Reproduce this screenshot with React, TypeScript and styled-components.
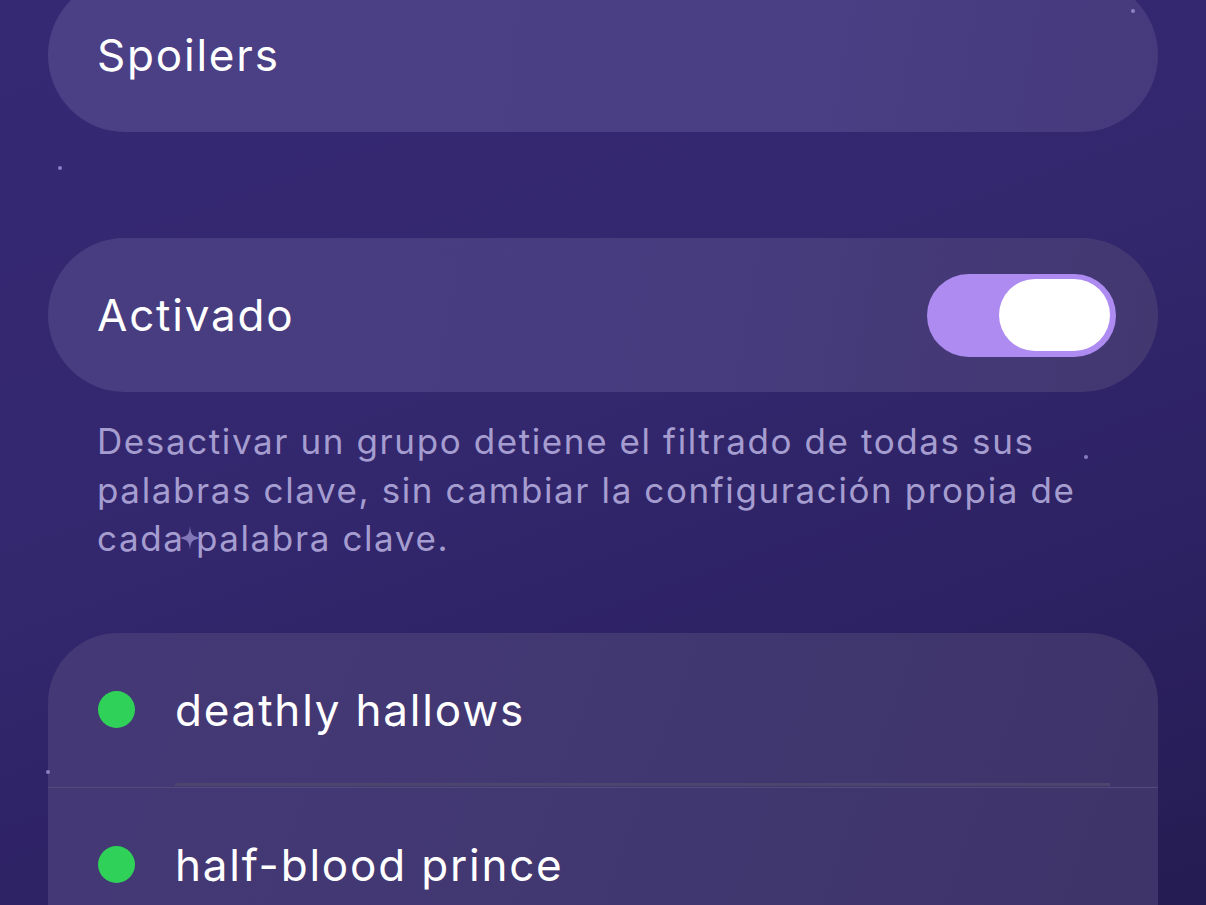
import React from 'react'
import styled, { createGlobalStyle } from 'styled-components'

const GlobalStyle = createGlobalStyle`
  html, body {
    margin: 0;
    padding: 0;
  }
  body {
    font-family: Inter, "Noto Sans", sans-serif;
    -webkit-font-smoothing: antialiased;
  }
`

const Screen = styled.div`
  width: 1206px;
  height: 905px;
  position: relative;
  overflow: hidden;
  background: linear-gradient(160deg, #362974 0%, #33276e 45%, #2c2161 75%, #251c52 100%);
  color: white;
`

const Content = styled.div`
  display: flex;
  flex-direction: column;
  padding: 0 48px;
  margin-top: -22px;
`

const PillCard = styled.div<{ $tone?: 'light' | 'mid' }>`
  height: 154px;
  border-radius: 77px;
  display: flex;
  align-items: center;
  justify-content: space-between;
  padding: 0 42px 0 49px;
  background: ${p =>
    p.$tone === 'light'
      ? 'linear-gradient(100deg, #4b3f86 0%, #4a3e84 70%, #463a7c 100%)'
      : 'linear-gradient(100deg, #483d80 0%, #473c7e 60%, #42376f 100%)'};
`

const Label = styled.span`
  font-size: 44px;
  font-weight: 400;
  letter-spacing: 1.8px;
`

const Toggle = styled.div`
  width: 189px;
  height: 83px;
  border-radius: 42px;
  background: #ad8bf1;
  display: flex;
  align-items: center;
  justify-content: flex-end;
  padding: 0 6px;
  box-sizing: border-box;
`

const Knob = styled.div`
  width: 111px;
  height: 72px;
  border-radius: 36px;
  background: #ffffff;
`

const Gap = styled.div<{ $h: number }>`
  height: ${p => p.$h}px;
  flex: none;
`

const Note = styled.p`
  margin: 0;
  padding: 0 71px 0 49px;
  font-size: 35px;
  line-height: 48.5px;
  color: #a59dd0;
  letter-spacing: 1.6px;
`

const ListCard = styled.div`
  border-radius: 70px 70px 0 0;
  background: linear-gradient(110deg, #443976 0%, #413770 60%, #3e3469 100%);
  overflow: hidden;
`

const Row = styled.div<{ $first?: boolean }>`
  height: 154px;
  display: flex;
  align-items: center;
  position: relative;
  padding-left: 50px;
  ${p =>
    p.$first &&
    `
    &::after {
      content: '';
      position: absolute;
      left: 127px;
      right: 48px;
      bottom: 1px;
      height: 3px;
      background: #4c466f;
    }
    border-bottom: 1px solid #524b7c;
  `}
`

const Dot = styled.span`
  width: 37px;
  height: 37px;
  border-radius: 50%;
  background: #30d158;
  flex: none;
`

const RowText = styled.span`
  margin-left: 40px;
  font-size: 44px;
  letter-spacing: 1.8px;
`

const Star = styled.span<{ $x: number; $y: number; $s?: number }>`
  position: absolute;
  left: ${p => p.$x}px;
  top: ${p => p.$y}px;
  width: ${p => p.$s ?? 4}px;
  height: ${p => p.$s ?? 4}px;
  border-radius: 50%;
  background: #9e94d4;
  opacity: 0.8;
`

const Sparkle = styled.svg`
  position: absolute;
  left: 178px;
  top: 526px;
`

export default function App() {
  return (
    <Screen>
      <GlobalStyle />
      <Content>
        <PillCard $tone="light">
          <Label>Spoilers</Label>
        </PillCard>
        <Gap $h={106} />
        <PillCard>
          <Label>Activado</Label>
          <Toggle>
            <Knob />
          </Toggle>
        </PillCard>
        <Gap $h={25} />
        <Note>
          Desactivar un grupo detiene el filtrado de todas sus palabras clave, sin cambiar la configuración propia de
          cada palabra clave.
        </Note>
        <Gap $h={70} />
        <ListCard>
          <Row $first>
            <Dot />
            <RowText>deathly hallows</RowText>
          </Row>
          <Row>
            <Dot />
            <RowText>half-blood prince</RowText>
          </Row>
        </ListCard>
      </Content>
      <Star $x={1131} $y={9} />
      <Star $x={58} $y={166} />
      <Star $x={1084} $y={455} />
      <Star $x={46} $y={770} />
      <Sparkle width="24" height="24" viewBox="0 0 24 24">
        <path d="M12 0 C12.8 8 13.5 10.5 24 12 C13.5 13.5 12.8 16 12 24 C11.2 16 10.5 13.5 0 12 C10.5 10.5 11.2 8 12 0 Z" fill="#8f85c4" opacity="0.85" />
      </Sparkle>
    </Screen>
  )
}
